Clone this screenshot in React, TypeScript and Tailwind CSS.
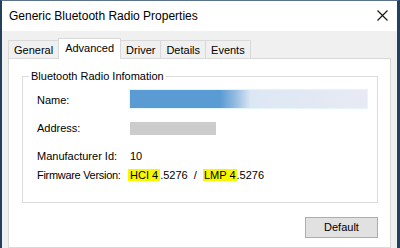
import React from "react";

const font = { fontFamily: '"Liberation Sans", Arial, sans-serif' };

export default function App() {
  const tabs = ["General", "Advanced", "Driver", "Details", "Events"];
  return (
    <div
      className="w-[400px] h-[248px] overflow-hidden flex flex-col bg-[#f0f0f0] border-l-2 border-r-[3px] border-t border-[#23405f] border-t-[#5b728c] text-black"
      style={font}
    >
      {/* Title bar */}
      <div className="h-[30px] shrink-0 bg-white flex items-center justify-between pl-[7px] pr-[9px]">
        <span className="text-[12px] leading-none">Generic Bluetooth Radio Properties</span>
        <svg width="11" height="11" viewBox="0 0 11 11" className="mb-[1px]">
          <path d="M0.5 0.5 L10.5 10.5 M10.5 0.5 L0.5 10.5" stroke="#111" strokeWidth="1.1" fill="none" />
        </svg>
      </div>

      {/* Tabs area */}
      <div className="flex-1 flex flex-col pl-[6px] pr-[6px]">
        <div className="h-[27px] shrink-0 flex items-end">
          {tabs.map((t) => {
            const sel = t === "Advanced";
            return sel ? (
              <div
                key={t}
                className="h-[21px] -mb-px -ml-px relative z-10 bg-white border border-b-0 border-[#d9d9d9] flex items-center px-[6px] text-[11px] leading-none pb-[1px]"
              >
                {t}
              </div>
            ) : (
              <div
                key={t}
                className="h-[18px] bg-[#f0f0f0] border border-b-0 border-[#d9d9d9] -ml-px first:ml-0 flex items-center px-[5px] pt-[2px] text-[11px] leading-none"
              >
                {t}
              </div>
            );
          })}
        </div>

        {/* Tab page */}
        <div className="flex-1 bg-white border border-[#d9d9d9] pt-[17px] pl-[13px] pr-[12px]">
          <div className="relative border border-[#dcdcdc] h-[127px] text-[11px]">
            <span className="absolute -top-[8px] left-[6px] bg-white px-[2px] leading-[14px]">
              Bluetooth Radio Infomation
            </span>
            <div className="flex flex-col pl-[14px]">
              <div className="mt-[13px] h-[18px] flex items-center">
                <span className="w-[93px] pt-[2px]">Name:</span>
                <div className="w-[237px] h-[18px] bg-[linear-gradient(to_right,#5b9bd4_0%,#5b9bd4_38%,#8fb9e0_44%,#dde7f3_51%,#e7eaf4_100%)] shadow-[0_0_1px_1px_#e6f5f8]" />
              </div>
              <div className="mt-[14px] h-[13px] flex items-center">
                <span className="w-[93px]">Address:</span>
                <div className="w-[86px] h-[13px] bg-[#cccccc]" />
              </div>
              <div className="mt-[14px] h-[14px] flex items-center">
                <span className="w-[93px]">Manufacturer Id:</span>
                <span>10</span>
              </div>
              <div className="mt-[5px] h-[14px] flex items-center">
                <span className="w-[91px] tracking-[-0.3px]">Firmware Version:</span>
                <span className="whitespace-pre">
                  <span className="bg-[#f7f700] px-[2px]">HCI 4</span>.5276  /  <span className="bg-[#f7f700] px-[1px]">LMP 4</span>.5276
                </span>
              </div>
            </div>
          </div>
          <div className="flex justify-end mt-[14px]">
            <button className="w-[73px] h-[21px] bg-[#e1e1e1] border border-[#adadad] text-[11px] leading-none flex items-center justify-center">
              Default
            </button>
          </div>
        </div>
      </div>
    </div>
  );
}
